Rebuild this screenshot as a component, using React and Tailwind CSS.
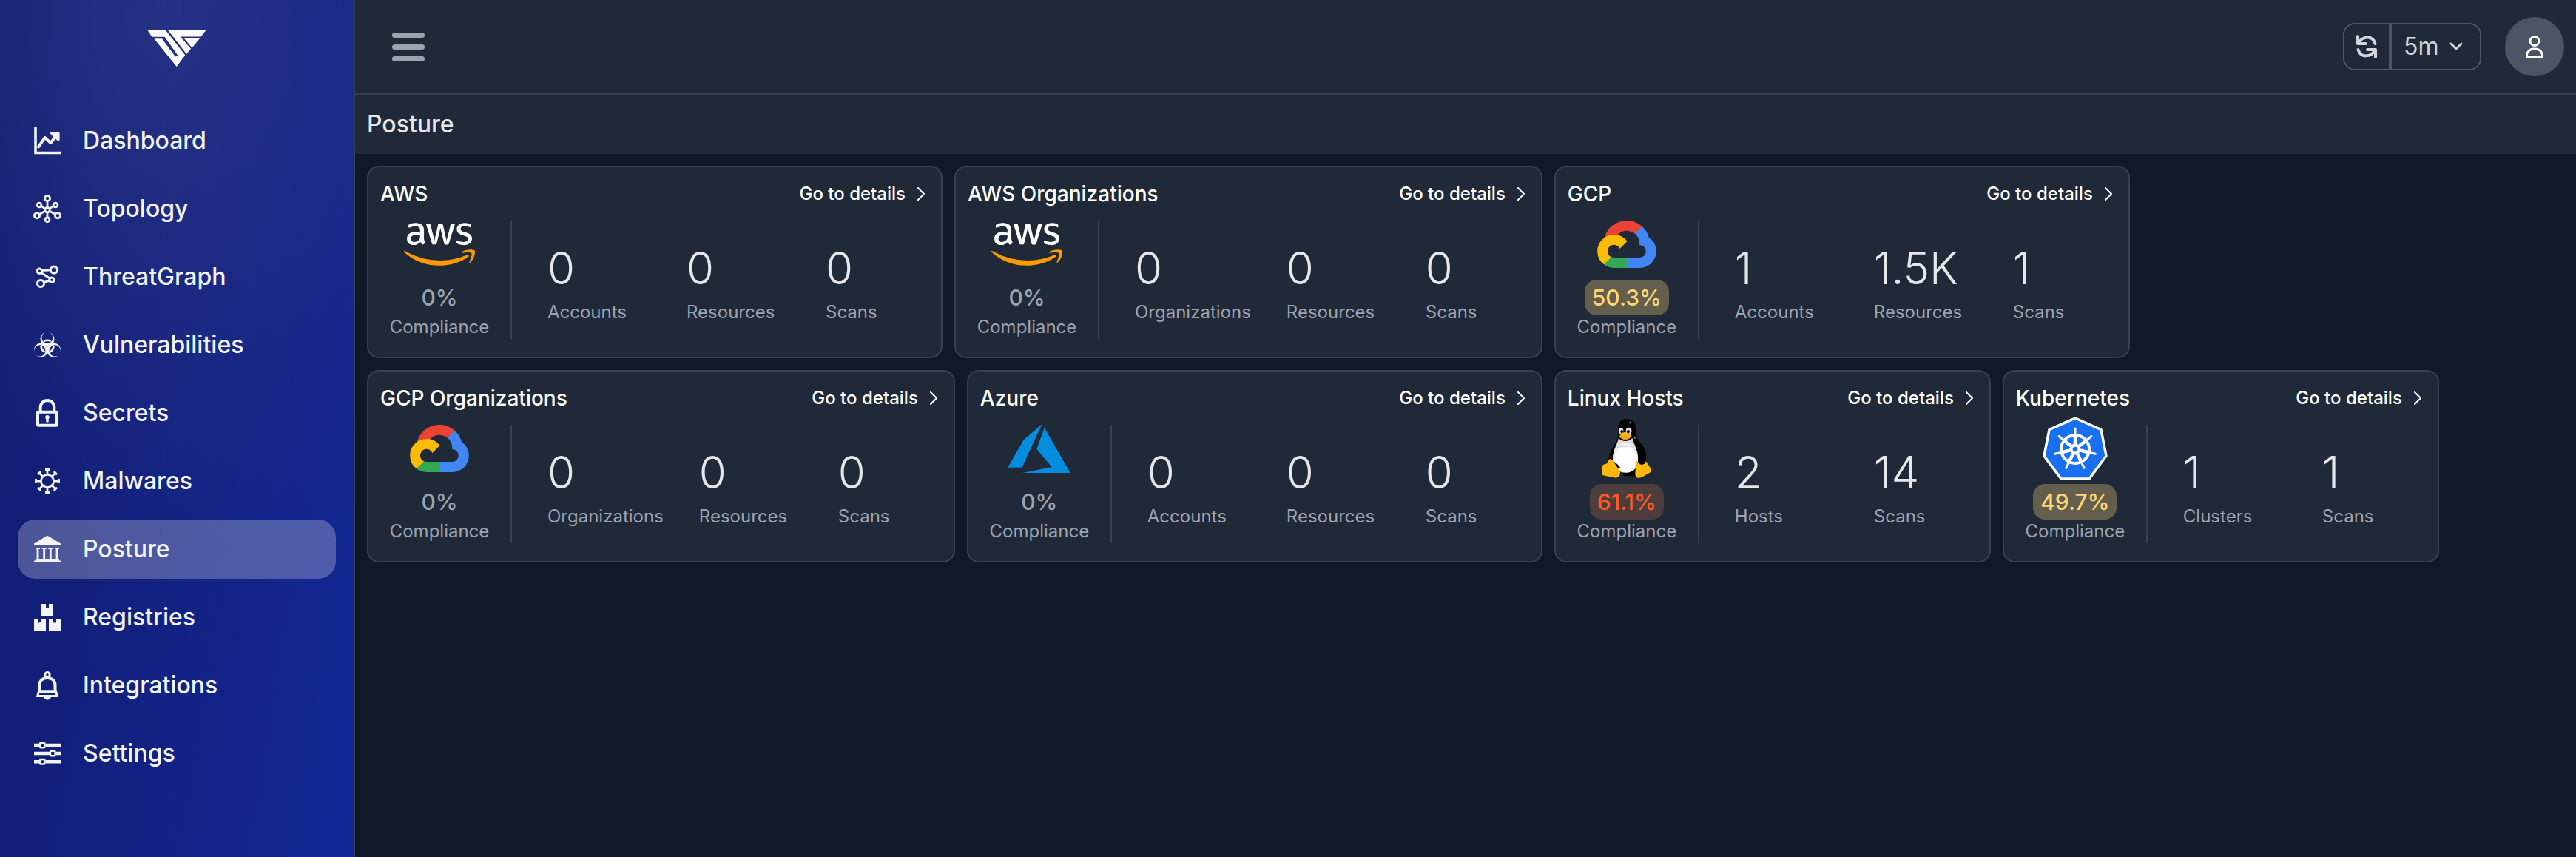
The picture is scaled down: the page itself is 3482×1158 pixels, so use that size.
import { FaAws } from 'react-icons/fa';

/* ---------- Sidebar icons ---------- */

function Icon({ children }) {
  return (
    <svg viewBox="0 0 36 36" className="size-9 shrink-0 overflow-visible" fill="none" stroke="currentColor" aria-hidden="true">
      {children}
    </svg>
  );
}

const DashboardIcon = () => (
  <Icon>
    <path d="M2 0V34.5H36" strokeWidth="3.6" />
    <path d="M6 26.5L14.5 14L22.5 21L32 9" strokeWidth="4" strokeLinecap="round" strokeLinejoin="round" />
    <path d="M23.5 8L33 8V17Z" fill="currentColor" strokeWidth="3.2" strokeLinejoin="round" />
  </Icon>
);

const TopologyIcon = () => (
  <Icon>
    <g strokeWidth="2.8">
      <circle cx="18" cy="4" r="3.6" />
      <circle cx="18" cy="19.7" r="3.2" />
      <circle cx="7" cy="13" r="2.9" />
      <circle cx="29" cy="13" r="2.9" />
      <circle cx="4" cy="27.3" r="3.6" />
      <circle cx="32" cy="27.3" r="3.6" />
      <circle cx="18" cy="32.7" r="2.9" />
      <path d="M18 7.6V16.5M18 23V30M9.6 14.4L15 18M26.4 14.4L21 18M7.2 25.5L15 21.3M28.8 25.5L21 21.3" />
    </g>
  </Icon>
);

const ThreatGraphIcon = () => (
  <Icon>
    <g strokeWidth="3">
      <circle cx="7.3" cy="10.3" r="3.2" />
      <circle cx="27" cy="8.7" r="4.6" />
      <circle cx="24" cy="22.3" r="3.2" />
      <circle cx="9" cy="27" r="4.6" />
      <path d="M10.5 9.6L22.5 8.8M9.8 12.4L21.5 20.2M13.4 25.4L21 23.2" />
    </g>
  </Icon>
);

const BiohazardIcon = () => (
  <Icon>
    {[0, 120, 240].map((a) => (
      <g key={a} transform={`rotate(${a} 18 20)`}>
        <path fill="currentColor" stroke="none" d="M15.5 1A9.5 9.5 0 1 0 20.5 1A7.6 7.6 0 1 1 15.5 1Z" />
        <path d="M13.2 13Q18 10.4 22.8 13" strokeWidth="2.6" />
      </g>
    ))}
  </Icon>
);

const LockIcon = () => (
  <Icon>
    <rect x="5" y="16.7" width="26" height="18" rx="1" strokeWidth="4" />
    <path d="M8.7 16V10.3a9.3 9.3 0 0 1 18.6 0V16" strokeWidth="4" />
    <circle cx="18" cy="23.8" r="2.8" fill="currentColor" stroke="none" />
    <path d="M18 24V30.5" strokeWidth="3.4" />
  </Icon>
);

const VirusIcon = () => (
  <Icon>
    <circle cx="18" cy="18" r="8.6" strokeWidth="2.8" />
    {[0, 45, 90, 135, 180, 225, 270, 315].map((a) => (
      <path key={a} d="M18 9.4V2M15 2.5H21" strokeWidth="2.8" transform={`rotate(${a} 18 18)`} />
    ))}
  </Icon>
);

const BankIcon = () => (
  <Icon>
    <g fill="currentColor" stroke="none">
      <path d="M16.5 .6Q18-.4 19.5 .6L36 10.5V13H0V10.5Z" />
      {[2, 10.7, 19.3, 28].map((x) => (
        <path key={x} d={`M${x} 16h6v2h-1.6v14h-2.8v-14H${x}z`} />
      ))}
      <path d="M2 31.4H34V33.4H36V36H0V33.4H2Z" />
    </g>
  </Icon>
);

const BoxesIcon = () => (
  <Icon>
    <g fill="currentColor" stroke="none">
      {['M10 0', 'M0 20', 'M20 20'].map((start) => (
        <path key={start} d={`${start}h6v6l2-1.4l2 1.4v-6h6v16h-16z`} />
      ))}
    </g>
  </Icon>
);

const BellIcon = () => (
  <Icon>
    <circle cx="18" cy="3.8" r="3.2" strokeWidth="3" />
    <path d="M7.5 27V17.5C7.5 11.5 12 8 18 8S28.5 11.5 28.5 17.5V27" strokeWidth="4" />
    <path d="M6.3 26.8H29.7L31.2 32.4H4.8Z" strokeWidth="3" />
    <path d="M13 33.5H23C22.5 39 13.5 39 13 33.5Z" fill="currentColor" stroke="none" />
  </Icon>
);

const SlidersIcon = () => (
  <Icon>
    <path d="M0 7H7M15.5 7H36M0 18H21M29.5 18H36M0 29.3H7M15.5 29.3H36" strokeWidth="4.4" />
    <g strokeWidth="2.4">
      <rect x="8" y="3.8" width="6.5" height="6.5" rx="1" />
      <rect x="22" y="14.8" width="6.5" height="6.5" rx="1" />
      <rect x="8" y="26" width="6.5" height="6.5" rx="1" />
    </g>
  </Icon>
);

/* ---------- Brand marks ---------- */

const BrandMark = () => (
  <svg viewBox="0 0 80 50" className="h-[50px] w-20" fill="#fff" role="img" aria-label="Home">
    <path d="M0 0H24.3L51.3 34.5L39.7 50L9.3 12.3H20L38 36.5L41.5 35L23.5 9.7H6.3Z" />
    <path d="M27.5 0H80L72.8 9.5H44.7L59 25.7L53.2 33Z" />
    <path d="M50 12H71L60.6 24.5Z" />
  </svg>
);

const AwsLogo = () => (
  <>
    <svg className="absolute size-0" aria-hidden="true">
      <defs>
        <linearGradient id="aws-fill" x1="0" y1="0" x2="0" y2="1">
          <stop offset="0.58" stopColor="#fff" />
          <stop offset="0.58" stopColor="#ff9900" />
        </linearGradient>
      </defs>
    </svg>
    <FaAws className="h-20 w-24 shrink-0" fill="url(#aws-fill)" aria-hidden="true" />
  </>
);

const GcpLogo = () => (
  <svg viewBox="0 0 256 206" className="h-16 w-20 shrink-0" aria-hidden="true">
    <path fill="#EA4335" d="M170.252 56.819l22.253-22.253 1.483-9.37C153.437-11.677 88.976-7.496 52.42 33.92 42.267 45.423 34.734 59.764 30.717 74.573l7.97-1.123 44.505-7.34 3.436-3.513c19.797-21.742 53.27-24.667 76.128-6.168l7.496.39z" />
    <path fill="#4285F4" d="M224.205 73.918a100.249 100.249 0 0 0-30.217-48.722l-31.232 31.232a55.515 55.515 0 0 1 20.379 44.037v5.544c15.35 0 27.797 12.445 27.797 27.796 0 15.352-12.446 27.485-27.797 27.485h-55.671l-5.466 5.934v33.34l5.466 5.231h55.67c39.93.311 72.553-31.494 72.864-71.424a72.303 72.303 0 0 0-31.793-60.453" />
    <path fill="#34A853" d="M71.87 205.796h55.593V161.29H71.87a27.275 27.275 0 0 1-11.466-2.498l-7.887 2.42-22.409 22.253-1.952 7.574c12.567 9.489 27.9 14.825 43.714 14.757" />
    <path fill="#FBBC05" d="M71.87 61.425C31.94 61.664-.237 94.228.001 134.16a72.301 72.301 0 0 0 28.222 56.88l32.248-32.246c-13.99-6.322-20.208-22.786-13.887-36.776 6.32-13.99 22.786-20.208 36.775-13.888a27.796 27.796 0 0 1 13.887 13.888l32.248-32.248A72.224 72.224 0 0 0 71.87 61.425" />
  </svg>
);

const AzureLogo = () => (
  <svg viewBox="0 0 85 66" className="h-[66px] w-[85px] shrink-0" fill="#028ddf" aria-hidden="true">
    <path d="M46.5 0L22 21L0 58.7H19.4Z" />
    <path d="M49.7 5L39.2 33.7L59.6 58L19.9 66H84.7Z" />
  </svg>
);

const TuxLogo = () => (
  <svg viewBox="0 0 203 240" className="h-20 w-[68px] shrink-0" aria-hidden="true">
    <defs>
      <linearGradient id="tux-beak" x1="0" y1="0" x2="0" y2="1">
        <stop offset="0" stopColor="#f5c321" />
        <stop offset="1" stopColor="#eb9a0a" />
      </linearGradient>
      <radialGradient id="tux-belly" cx="0.5" cy="0.65" r="0.6">
        <stop offset="0.6" stopColor="#fff" />
        <stop offset="1" stopColor="#d9d9dc" />
      </radialGradient>
    </defs>
    <path fill="#030303" d="M101 0C75 0 65 18 66 42C67 62 68 72 62 84C52 104 38 120 32 142C28 160 22 170 28 182L75 205L90 232H140L150 200L178 172C184 150 178 120 160 100C146 84 140 72 139 50C140 20 130 0 101 0Z" />
    <path fill="url(#tux-belly)" d="M68 78C66 96 46 124 44 158C43 195 65 218 98 218C130 218 148 195 147 158C147 130 132 108 124 78C108 94 84 94 68 78Z" />
    <path fill="none" stroke="#cfcfd4" strokeWidth="3" d="M60 118C74 110 88 112 96 114C108 108 122 112 132 116" />
    <ellipse cx="78" cy="49" rx="9.5" ry="13" fill="#e9e9e9" />
    <ellipse cx="109" cy="49" rx="12" ry="14" fill="#e9e9e9" />
    <ellipse cx="81" cy="52" rx="5" ry="8" fill="#0a0a0a" />
    <ellipse cx="107" cy="52" rx="6" ry="8" fill="#0a0a0a" />
    <path fill="url(#tux-beak)" d="M92 54C102 52 112 62 120 66C124 74 108 84 96 85C84 84 70 76 72 68C78 62 84 55 92 54Z" />
    <ellipse cx="115" cy="15" rx="4" ry="5" fill="#5b5f66" />
    <ellipse cx="134" cy="76" rx="3" ry="5" fill="#8b8f96" />
    <path fill="#fcb70c" d="M28 166C34 160 42 164 48 172L72 205C78 222 72 236 58 239C40 236 20 232 4 228C-2 222 4 212 2 200C0 190 4 184 14 184C22 182 24 174 28 166Z" />
    <path fill="#fcb70c" d="M138 170C146 172 152 176 160 184C172 184 176 178 178 172C184 178 194 192 200 206C204 214 196 218 186 222C174 230 160 240 146 239C136 236 134 226 136 214C138 196 134 182 138 170Z" />
    <path fill="#030303" d="M48 172C58 180 76 192 74 200C70 204 64 198 58 190Z" />
    <ellipse cx="162" cy="172" rx="15" ry="13" fill="#030303" />
  </svg>
);

const KubernetesLogo = () => (
  <svg viewBox="0 0 88 86" className="h-[86px] w-[88px] shrink-0" aria-hidden="true">
    <path fill="#186ff0" stroke="#fff" strokeWidth="3.5" strokeLinejoin="round" d="M44 2L79 17.5L86 53L63 84H25L2 53L9 17.5Z" />
    <g fill="none" stroke="#fff" strokeLinecap="round">
      <circle cx="44" cy="44" r="19" strokeWidth="4" />
      {[0, 1, 2, 3, 4, 5, 6].map((i) => (
        <g key={i} transform={`rotate(${(i * 360) / 7} 44 44)`}>
          <path d="M44 40V16" strokeWidth="3" />
          <path d="M44 38V27" strokeWidth="4.5" />
        </g>
      ))}
      <circle cx="44" cy="44" r="5.5" strokeWidth="4" />
    </g>
    <circle cx="44" cy="44" r="3.3" fill="#186ff0" />
  </svg>
);

/* ---------- Data ---------- */

const navItems = [
  { label: 'Dashboard', icon: DashboardIcon },
  { label: 'Topology', icon: TopologyIcon },
  { label: 'ThreatGraph', icon: ThreatGraphIcon },
  { label: 'Vulnerabilities', icon: BiohazardIcon },
  { label: 'Secrets', icon: LockIcon },
  { label: 'Malwares', icon: VirusIcon },
  { label: 'Posture', icon: BankIcon, active: true },
  { label: 'Registries', icon: BoxesIcon },
  { label: 'Integrations', icon: BellIcon },
  { label: 'Settings', icon: SlidersIcon },
];

const toneClasses = {
  none: 'text-[#9ca3af]',
  medium: 'bg-[#635f4c] text-[#ffd577]',
  high: 'bg-[#4d3d3d] text-[#ff5a1f]',
};

const accounts = [
  { name: 'AWS', logo: AwsLogo, score: '0%', tone: 'none', metrics: [['0', 'Accounts'], ['0', 'Resources'], ['0', 'Scans']] },
  { name: 'AWS Organizations', logo: AwsLogo, score: '0%', tone: 'none', metrics: [['0', 'Organizations'], ['0', 'Resources'], ['0', 'Scans']] },
  { name: 'GCP', logo: GcpLogo, score: '50.3%', tone: 'medium', metrics: [['1', 'Accounts'], ['1.5K', 'Resources'], ['1', 'Scans']] },
  { name: 'GCP Organizations', logo: GcpLogo, score: '0%', tone: 'none', metrics: [['0', 'Organizations'], ['0', 'Resources'], ['0', 'Scans']] },
  { name: 'Azure', logo: AzureLogo, score: '0%', tone: 'none', metrics: [['0', 'Accounts'], ['0', 'Resources'], ['0', 'Scans']] },
  { name: 'Linux Hosts', logo: TuxLogo, score: '61.1%', tone: 'high', metrics: [['2', 'Hosts'], ['14', 'Scans']] },
  { name: 'Kubernetes', logo: KubernetesLogo, score: '49.7%', tone: 'medium', metrics: [['1', 'Clusters'], ['1', 'Scans']] },
];

/* ---------- Layout ---------- */

function Sidebar() {
  return (
    <aside className="w-[480px] shrink-0 border-r-2 border-[#374151] bg-[radial-gradient(ellipse_90%_65%_at_45%_0%,rgba(48,60,136,0.65),rgba(48,60,136,0)),linear-gradient(100deg,#111b6c,#132896)]">
      <div className="flex h-[130px] items-center justify-center">
        <BrandMark />
      </div>
      <nav className="px-6 pt-5" aria-label="Main">
        <ul className="flex flex-col gap-3">
          {navItems.map(({ label, icon: ItemIcon, active }) => (
            <li key={label}>
              <a
                href="#"
                aria-current={active ? 'page' : undefined}
                className={`flex h-20 items-center gap-[30px] rounded-3xl px-[22px] text-[32px] leading-10 font-medium text-[#f3f4f6] ${active ? 'bg-white/25' : ''}`}
              >
                <ItemIcon />
                {label}
              </a>
            </li>
          ))}
        </ul>
      </nav>
    </aside>
  );
}

function Header() {
  return (
    <header className="flex h-32 items-center justify-between border-b-2 border-[#374151] bg-[#1f2937] pr-4 pl-[50px]">
      <button type="button" aria-label="Toggle menu" className="flex flex-col gap-[9px]">
        <span className="h-[7px] w-11 rounded-full bg-[#9ca3af]" />
        <span className="h-[7px] w-11 rounded-full bg-[#9ca3af]" />
        <span className="h-[7px] w-11 rounded-full bg-[#9ca3af]" />
      </button>
      <div className="flex items-center gap-8">
        <div className="flex h-16 items-stretch divide-x-4 divide-[#4b5563] rounded-2xl border-2 border-[#4b5563] text-[#d1d5db]">
          <button type="button" aria-label="Refresh" className="flex w-16 items-center justify-center">
            <svg viewBox="0 0 28 32" className="h-8 w-7" fill="none" stroke="currentColor" strokeWidth="4" strokeLinecap="round" strokeLinejoin="round" aria-hidden="true">
              <path d="M2 2V12H13M3 11C8 2 22 0 25.5 12" />
              <path d="M26 30V20H15M25 21C20 30 6 32 2.5 20" />
            </svg>
          </button>
          <div className="relative flex items-center">
            <select aria-label="Refresh interval" defaultValue="5m" className="h-full w-[119px] appearance-none bg-transparent pl-4 text-[32px] leading-10">
              <option>5m</option>
            </select>
            <svg viewBox="0 0 16 10" className="pointer-events-none absolute right-6 h-2.5 w-4 overflow-visible" fill="none" stroke="currentColor" strokeWidth="3" strokeLinecap="round" strokeLinejoin="round" aria-hidden="true">
              <path d="M1 1L8 8L15 1" />
            </svg>
          </div>
        </div>
        <button type="button" aria-label="Account" className="flex size-20 items-center justify-center rounded-full bg-[#4b5563] text-white">
          <svg viewBox="0 0 24 30" className="h-[30px] w-6" fill="none" stroke="currentColor" strokeWidth="2.8" strokeLinejoin="round" aria-hidden="true">
            <circle cx="12" cy="7.5" r="6" />
            <path d="M1.5 28.5C1.5 21 6 18 12 18S22.5 21 22.5 28.5Z" />
          </svg>
        </button>
      </div>
    </header>
  );
}

function PostureCard({ name, logo: Logo, score, tone, metrics }) {
  return (
    <article className="rounded-2xl border-2 border-[#374151] bg-[#1f2937] px-4 pt-4 pb-6">
      <div className="flex h-10 items-center justify-between">
        <h2 className="text-[28px] leading-10 font-medium text-white">{name}</h2>
        <a href="#" className="flex items-center gap-4 pr-1.5 text-2xl leading-8 font-medium text-white">
          Go to details
          <svg viewBox="0 0 10 18" className="h-[18px] w-2.5" fill="none" stroke="currentColor" strokeWidth="2" strokeLinecap="round" strokeLinejoin="round" aria-hidden="true">
            <path d="M1 1L9 9L1 17" />
          </svg>
        </a>
      </div>
      <div className="mt-4 flex">
        <div className="flex w-40 shrink-0 flex-col items-center">
          <div className="mb-4 flex h-16 items-center justify-center">
            <Logo />
          </div>
          <div className={`rounded-2xl px-2.5 text-[30px] leading-[48px] font-medium ${toneClasses[tone]}`}>{score}</div>
          <div className="text-2xl leading-8 text-[#9ca3af]">Compliance</div>
        </div>
        <div className="ml-4 w-0.5 bg-[#374151]" />
        <dl className="ml-12 flex items-center gap-12 pt-2">
          {metrics.map(([value, label]) => (
            <div key={label} className="flex min-w-[140px] flex-col-reverse gap-2">
              <dt className="text-2xl leading-8 text-[#9ca3af]">{label}</dt>
              <dd className="text-[60px] leading-[72px] font-light text-[#e5e7eb]">{value}</dd>
            </div>
          ))}
        </dl>
      </div>
    </article>
  );
}

export default function App() {
  return (
    <div className="flex min-h-screen bg-[#111827] font-['Inter',sans-serif]">
      <Sidebar />
      <div className="min-w-0 flex-1">
        <Header />
        <div className="flex h-20 items-center bg-[#1f2937] px-4">
          <h1 className="text-[32px] leading-10 font-medium text-[#e5e7eb]">Posture</h1>
        </div>
        <main className="flex flex-wrap gap-4 p-4">
          {accounts.map((account) => (
            <PostureCard key={account.name} {...account} />
          ))}
        </main>
      </div>
    </div>
  );
}
